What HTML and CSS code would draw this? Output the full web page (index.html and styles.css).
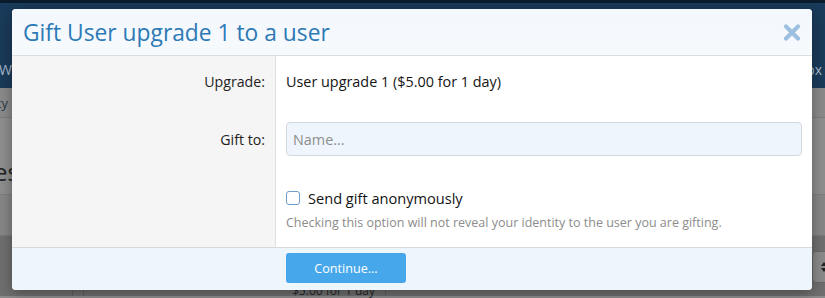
FILE: index.html
```html
<!DOCTYPE html>
<html lang="en">
<head>
<meta charset="utf-8">
<title>Gift User upgrade 1 to a user</title>
<link rel="stylesheet" href="styles.css">
</head>
<body>
<div class="page">
  <div class="page-top"></div>
  <div class="page-header">
    <div class="nav">
      <span class="nav-left">What's new</span>
      <span class="nav-right">Inbox</span>
    </div>
  </div>
  <div class="subnav"><div class="clip-right"><span>Latest activity</span></div></div>
  <div class="content-title"><div class="clip-right title-clip"><span>Account upgrades</span></div></div>
  <div class="content-block"></div>
  <div class="content-row">
    <div class="cell-a"></div>
    <div class="cell-b"><span class="row-price">$5.00 for 1 day</span></div>
    <div class="cell-spacer"></div>
    <span class="row-select"><svg width="8" height="14" viewBox="0 0 8 14"><path d="M4 2 L7 6 H1 Z M4 12 L7 8 H1 Z" fill="#222"/></svg></span>
  </div>
</div>

<div class="overlay">
  <div class="overlay-header">
    <h1 class="overlay-title">Gift User upgrade 1 to a user</h1>
    <button class="overlay-close" aria-label="Close">
      <svg width="18" height="17" viewBox="0 0 18 17"><path d="M3 2.5 L15 14.5 M15 2.5 L3 14.5" stroke="#9dc0e0" stroke-width="4.2" stroke-linecap="round"/></svg>
    </button>
  </div>
  <div class="form-body">
    <div class="form-label row-first">Upgrade:</div>
    <div class="form-value row-first">User upgrade 1 ($5.00 for 1 day)</div>

    <div class="form-label row-input">Gift to:</div>
    <div class="form-value row-input"><input class="text-input" type="text" placeholder="Name..."></div>

    <div class="form-label row-last"></div>
    <div class="form-value row-last">
      <label class="check"><span class="check-box"></span><span>Send gift anonymously</span></label>
      <div class="hint">Checking this option will not reveal your identity to the user you are gifting.</div>
    </div>
  </div>
  <div class="form-footer">
    <button class="button-primary">Continue...</button>
  </div>
</div>
</body>
</html>
```
FILE: styles.css
```css
* { box-sizing: border-box; }
html, body { margin: 0; padding: 0; }
body {
  width: 825px;
  height: 298px;
  overflow: hidden;
  background: #8c8c8c;
  font-family: "Open Sans", "Noto Sans", sans-serif;
  color: #141414;
  position: relative;
}

/* dimmed page behind the overlay */
.page-top { height: 3px; background: #0b1c2c; }
.page-header { height: 85px; background: #1a3b5b; display: flex; align-items: flex-end; }
.nav { display: flex; justify-content: space-between; width: 100%; height: 36px; }
.nav-left, .nav-right { color: #a9b9c9; font-size: 14px; line-height: 36px; }
.nav-left { margin-left: -1px; }
.nav-right { margin-right: 3px; }
.subnav { height: 30px; background: #8a8a8a; border-bottom: 1px solid #7c7c7c; }
.clip-right { width: 8px; display: flex; justify-content: flex-end; white-space: nowrap; }
.subnav span { flex: none; font-size: 13px; line-height: 30px; color: #2c3a48; }
.content-title { height: 77px; background: #8e8e8e; border-bottom: 1px solid #7d7d7d; display: flex; align-items: center; padding-top: 30px; }
.title-clip { width: 19px; }
.content-title span { flex: none; font-size: 24px; color: #232323; }
.content-block { height: 41px; background: #868686; border-bottom: 1px solid #7b7b7b; }
.content-row { height: 60px; background: #6f6f6f; padding-left: 72px; display: flex; align-items: flex-start; }
.cell-a { width: 11px; height: 100%; border-left: 1px solid #5e5e5e; }
.cell-b { width: 303px; height: 100%; border-left: 1px solid #5e5e5e; border-right: 1px solid #5e5e5e; text-align: right; padding: 45px 10px 0 0; line-height: 16px; }
.cell-spacer { flex: 1; }
.row-price { font-size: 12px; color: #262626; }
.row-select { width: 40px; height: 32px; margin-top: 15px; border: 1px solid #666; border-radius: 4px; margin-right: -27px; display: flex; align-items: center; padding-left: 7px; background: #8a8a8a; }

/* overlay */
.overlay {
  position: absolute;
  left: 12px;
  top: 9px;
  width: 800px;
  background: #fff;
  border-radius: 4px;
  overflow: hidden;
  box-shadow: 0 3px 14px rgba(0,0,0,0.35);
}
.overlay-header {
  height: 47px;
  background: linear-gradient(#f3f8fd, #f7fafd);
  border-bottom: 1px solid #dadee2;
  display: flex;
  align-items: center;
  justify-content: space-between;
  padding: 0 11px 0 11px;
}
.overlay-title {
  margin: 0;
  font-weight: 400;
  font-size: 22.8px;
  color: #2d79b5;
  line-height: 30px;
  padding-top: 2px;
}
.overlay-close {
  border: 0;
  background: none;
  padding: 0;
  width: 18px;
  height: 17px;
  margin-top: 1px;
  display: flex;
}

.form-body {
  display: grid;
  grid-template-columns: 264px 1fr;
  border-bottom: 1px solid #d8d8d8;
}
.form-label {
  background: #f5f5f5;
  border-right: 1px solid #dfdfdf;
  text-align: right;
  padding-right: 10px;
  font-size: 14.2px;
  color: #1e1e1e;
  line-height: 20px;
}
.form-value {
  padding-left: 10px;
  padding-right: 10px;
  font-size: 14.4px;
  line-height: 20px;
}
.row-first { padding-top: 16px; padding-bottom: 14px; }
.row-input { padding-top: 16px; padding-bottom: 16px; }
.form-label.row-input { padding-top: 24px; }
.row-last { padding-top: 16px; padding-bottom: 16px; }

.text-input {
  display: block;
  width: 100%;
  height: 34px;
  border: 1px solid #d3d8de;
  border-radius: 4px;
  background: #eef5fc;
  font-family: inherit;
  font-size: 14.4px;
  padding: 0 6px;
  color: #141414;
}
.text-input::placeholder { color: #8d8d8d; }

.check { display: flex; align-items: center; gap: 8px; font-size: 14.6px; line-height: 20px; color: #141414; }
.check-box {
  width: 14px;
  height: 14px;
  border: 1px solid #6f9ccb;
  border-radius: 3px;
  background: #fff;
  flex: none;
}
.hint { font-size: 12.5px; color: #8c8c8c; line-height: 16px; margin-top: 7px; }

.form-footer {
  background: #edf5fd;
  padding: 5px 0 7px 274px;
}
.button-primary {
  display: block;
  width: 120px;
  height: 30px;
  border: 0;
  border-radius: 3px;
  background: #47a7eb;
  color: #fff;
  font-family: inherit;
  font-size: 12.6px;
  padding: 0;
}
```
